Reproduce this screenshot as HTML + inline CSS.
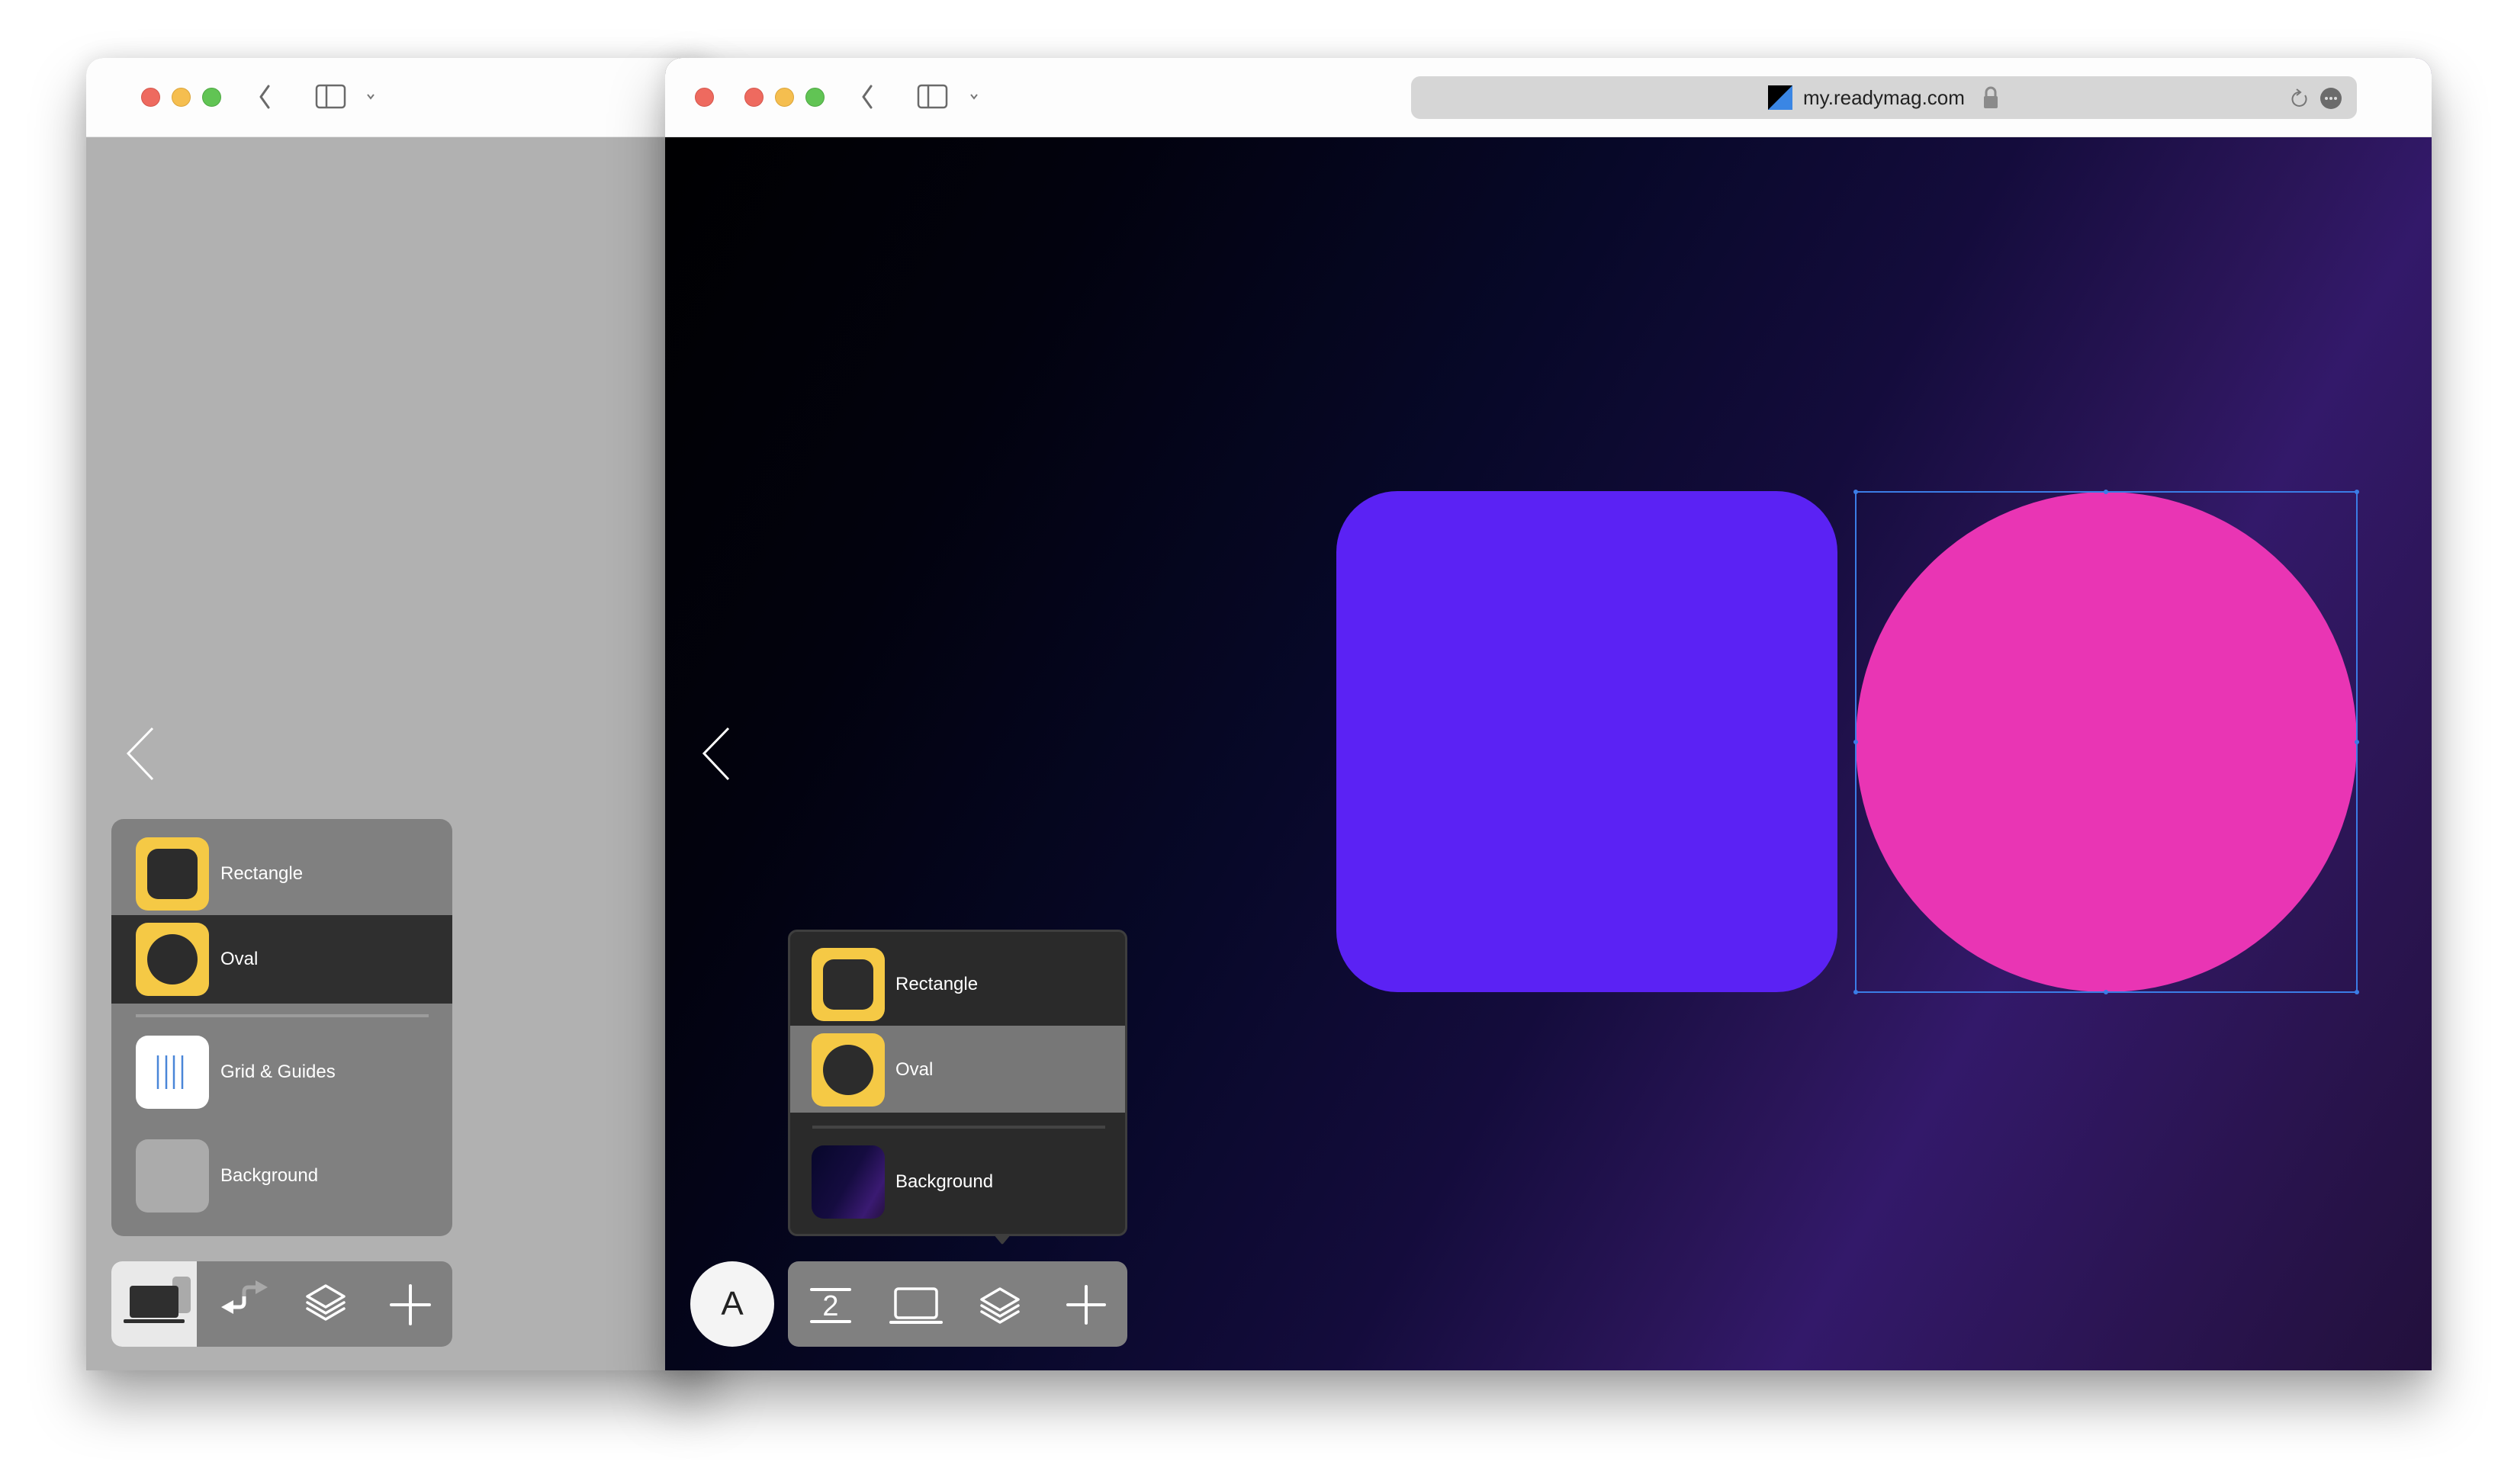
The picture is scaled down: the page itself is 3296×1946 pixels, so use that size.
<!DOCTYPE html>
<html><head><meta charset="utf-8"><style>
*{margin:0;padding:0;box-sizing:border-box}
body{width:3296px;height:1946px;background:#fff;position:relative;overflow:hidden;font-family:"Liberation Sans",sans-serif}
.abs{position:absolute}
.win{position:absolute;border-radius:22px 22px 0 0;overflow:hidden;box-shadow:0 40px 70px rgba(0,0,0,.35),0 0 30px rgba(0,0,0,.12)}
.tb{position:absolute;left:0;right:0;top:0;height:104px;background:#fdfdfd;border-bottom:1px solid #e4e4e4}
.dot{position:absolute;width:25px;height:25px;border-radius:50%;top:115px}
.r{background:#ee6a5f;border:1px solid #d5574d}.y{background:#f5be4f;border:1px solid #dca53a}.g{background:#61c454;border:1px solid #4ea843}
.lbl{position:absolute;color:#fff;font-size:24px}
.ic{position:absolute;width:96px;height:96px;border-radius:16px}
</style></head><body>

<div class="win" style="left:113px;top:76px;width:820px;height:1721px;background:#b1b1b1">
  <div class="tb"></div>
</div>
<div class="dot r" style="left:185px"></div>
<div class="dot y" style="left:225px"></div>
<div class="dot g" style="left:265px"></div>
<svg class="abs" style="left:330px;top:105px" width="180" height="45">
  <path d="M22 8 L12 22 L22 36" fill="none" stroke="#6a6a6a" stroke-width="3" stroke-linecap="round" stroke-linejoin="round"/>
  <rect x="85" y="7" width="37" height="29" rx="4" fill="none" stroke="#6a6a6a" stroke-width="2.5"/>
  <line x1="98" y1="7" x2="98" y2="36" stroke="#6a6a6a" stroke-width="2.5"/>
  <path d="M152 19 l4 5 l4 -5" fill="none" stroke="#777" stroke-width="2"/>
</svg>
<svg class="abs" style="left:160px;top:950px" width="50" height="80"><path d="M40 5 L8 38 L40 72" fill="none" stroke="#fff" stroke-width="3"/></svg>

<div class="abs" style="left:146px;top:1074px;width:447px;height:547px;background:#808080;border-radius:16px;overflow:hidden">
  <div class="abs" style="left:0;top:126px;width:447px;height:116px;background:#2f2f2f"></div>
  <div class="abs" style="left:32px;top:256px;width:384px;height:4px;background:#9c9c9c"></div>
</div>
<div class="ic" style="left:178px;top:1098px;background:#f5c945"><div class="abs" style="left:15px;top:15px;width:66px;height:66px;border-radius:14px;background:#2c2c2c"></div></div>
<div class="lbl" style="left:289px;top:1132px">Rectangle</div>
<div class="ic" style="left:178px;top:1210px;background:#f5c945"><div class="abs" style="left:15px;top:15px;width:66px;height:66px;border-radius:50%;background:#2c2c2c"></div></div>
<div class="lbl" style="left:289px;top:1244px">Oval</div>
<div class="ic" style="left:178px;top:1358px;background:#fff">
  <svg width="96" height="96"><g stroke="#4a86d8" stroke-width="2.5"><line x1="29" y1="26" x2="29" y2="70"/><line x1="40" y1="26" x2="40" y2="70"/><line x1="50" y1="26" x2="50" y2="70"/><line x1="61" y1="26" x2="61" y2="70"/></g></svg>
</div>
<div class="lbl" style="left:289px;top:1392px">Grid &amp; Guides</div>
<div class="ic" style="left:178px;top:1494px;background:#ababab"></div>
<div class="lbl" style="left:289px;top:1528px">Background</div>

<div class="abs" style="left:146px;top:1654px;width:447px;height:112px;background:#808080;border-radius:14px;overflow:hidden">
  <div class="abs" style="left:0;top:0;width:112px;height:112px;background:#e9e9e9"></div>
</div>
<svg class="abs" style="left:146px;top:1654px" width="447" height="112">
  <rect x="80" y="20" width="24" height="48" rx="5" fill="#aaa"/>
  <rect x="24" y="32" width="64" height="42" rx="4" fill="#2f2f2f"/>
  <rect x="16" y="76" width="80" height="5" rx="2" fill="#2f2f2f"/>
  <path d="M174 46 v-6 q0 -6 6 -6 h10" fill="none" stroke="#a8a8a8" stroke-width="5"/>
  <path d="M189 25 l16 9 l-16 9 z" fill="#a8a8a8"/>
  <path d="M174 46 v8 q0 6 -6 6 h-10" fill="none" stroke="#fff" stroke-width="5"/>
  <path d="M160 51 l-16 9 l16 9 z" fill="#fff"/>
  <g fill="none" stroke="#fff" stroke-width="3.5" stroke-linejoin="round" stroke-linecap="round">
    <path d="M257 46 l24 -14 l24 14 l-24 14 z"/><path d="M257 54 l24 14 l24 -14"/><path d="M257 62 l24 14 l24 -14"/>
  </g>
  <g stroke="#fff" stroke-width="4" stroke-linecap="round"><line x1="392" y1="32" x2="392" y2="82"/><line x1="367" y1="57" x2="417" y2="57"/></g>
</svg>

<div class="win" style="left:872px;top:76px;width:2316px;height:1721px;background:linear-gradient(119deg,#000 0%,#02020e 20%,#070828 40%,#140c3c 56%,#2a1558 68%,#33196a 74%,#2a1450 88%,#22103c 100%)">
  <div class="tb"></div>
</div>
<div class="dot r" style="left:911px"></div>
<div class="dot r" style="left:976px"></div>
<div class="dot y" style="left:1016px"></div>
<div class="dot g" style="left:1056px"></div>
<svg class="abs" style="left:1120px;top:105px" width="180" height="45">
  <path d="M22 8 L12 22 L22 36" fill="none" stroke="#6a6a6a" stroke-width="3" stroke-linecap="round" stroke-linejoin="round"/>
  <rect x="84" y="7" width="37" height="29" rx="4" fill="none" stroke="#6a6a6a" stroke-width="2.5"/>
  <line x1="97" y1="7" x2="97" y2="36" stroke="#6a6a6a" stroke-width="2.5"/>
  <path d="M153 19 l4 5 l4 -5" fill="none" stroke="#777" stroke-width="2"/>
</svg>
<div class="abs" style="left:1850px;top:100px;width:1240px;height:56px;background:#d6d6d6;border-radius:12px"></div>
<svg class="abs" style="left:2318px;top:112px" width="32" height="32"><rect width="32" height="32" fill="#3a86e4"/><path d="M0 0 H32 L0 32 Z" fill="#000"/></svg>
<div class="abs" style="left:2364px;top:113px;font-size:26px;color:#222">my.readymag.com</div>
<svg class="abs" style="left:2598px;top:112px" width="24" height="32"><path d="M6 14 v-5 a6 6 0 0 1 12 0 v5" fill="none" stroke="#8a8a8a" stroke-width="3"/><rect x="3" y="14" width="18" height="16" rx="2" fill="#8a8a8a"/></svg>
<svg class="abs" style="left:2995px;top:112px" width="80" height="34">
  <path d="M20 9 a9 9 0 1 0 7 4" fill="none" stroke="#777" stroke-width="2"/><path d="M16 5 l5 4 l-5 4" fill="none" stroke="#777" stroke-width="2"/>
  <circle cx="61" cy="17" r="14" fill="#6b6b6b"/><g fill="#ddd"><circle cx="55" cy="17" r="2"/><circle cx="61" cy="17" r="2"/><circle cx="67" cy="17" r="2"/></g>
</svg>
<svg class="abs" style="left:915px;top:950px" width="50" height="80"><path d="M40 5 L8 38 L40 72" fill="none" stroke="#fff" stroke-width="3"/></svg>

<div class="abs" style="left:1752px;top:644px;width:657px;height:657px;background:#5b22f4;border-radius:80px"></div>
<div class="abs" style="left:2433px;top:645px;width:657px;height:656px;background:#e935b4;border-radius:50%"></div>
<svg class="abs" style="left:2428px;top:640px" width="668" height="667">
  <rect x="5" y="5" width="657" height="656" fill="none" stroke="#3b7de6" stroke-width="2"/>
  <g fill="#3b7de6"><circle cx="5" cy="5" r="3"/><circle cx="333" cy="5" r="3"/><circle cx="662" cy="5" r="3"/><circle cx="5" cy="333" r="3"/><circle cx="662" cy="333" r="3"/><circle cx="5" cy="661" r="3"/><circle cx="333" cy="661" r="3"/><circle cx="662" cy="661" r="3"/></g>
</svg>

<div class="abs" style="left:1033px;top:1219px;width:445px;height:402px;background:#2a2a2a;border:3px solid #3e3e3e;border-radius:12px;overflow:hidden">
  <div class="abs" style="left:0;top:123px;width:445px;height:114px;background:#777"></div>
  <div class="abs" style="left:29px;top:254px;width:384px;height:4px;background:#444"></div>
</div>
<svg class="abs" style="left:1300px;top:1618px" width="28" height="18"><path d="M2 0 L26 0 L16 12 Q14 15 12 12 Z" fill="#3e3e3e"/></svg>
<div class="ic" style="left:1064px;top:1243px;background:#f5c945"><div class="abs" style="left:15px;top:15px;width:66px;height:66px;border-radius:14px;background:#2c2c2c"></div></div>
<div class="lbl" style="left:1174px;top:1277px">Rectangle</div>
<div class="ic" style="left:1064px;top:1355px;background:#f5c945"><div class="abs" style="left:15px;top:15px;width:66px;height:66px;border-radius:50%;background:#2c2c2c"></div></div>
<div class="lbl" style="left:1174px;top:1389px">Oval</div>
<div class="ic" style="left:1064px;top:1502px;background:linear-gradient(120deg,#07072a 0%,#150c40 50%,#3a1a72 80%,#25103e 100%)"></div>
<div class="lbl" style="left:1174px;top:1536px">Background</div>

<div class="abs" style="left:905px;top:1654px;width:110px;height:112px;border-radius:50%;background:#f4f4f4;text-align:center;line-height:112px;font-size:44px;color:#222">A</div>
<div class="abs" style="left:1033px;top:1654px;width:445px;height:112px;background:#808080;border-radius:14px"></div>
<svg class="abs" style="left:1033px;top:1654px" width="445" height="112">
  <g stroke="#fff" stroke-width="4" stroke-linecap="round"><line x1="31" y1="37" x2="81" y2="37"/><line x1="31" y1="79" x2="81" y2="79"/></g>
  <text x="56" y="71" font-family="Liberation Sans" font-size="38" fill="#fff" text-anchor="middle">2</text>
  <rect x="141" y="36" width="54" height="38" rx="4" fill="none" stroke="#fff" stroke-width="3.5"/>
  <line x1="135" y1="80" x2="201" y2="80" stroke="#fff" stroke-width="4" stroke-linecap="round"/>
  <g fill="none" stroke="#fff" stroke-width="3.5" stroke-linejoin="round" stroke-linecap="round">
    <path d="M254 50 l24 -14 l24 14 l-24 14 z"/><path d="M254 58 l24 14 l24 -14"/><path d="M254 66 l24 14 l24 -14"/>
  </g>
  <g stroke="#fff" stroke-width="4" stroke-linecap="round"><line x1="391" y1="33" x2="391" y2="81"/><line x1="367" y1="57" x2="415" y2="57"/></g>
</svg>
</body></html>
